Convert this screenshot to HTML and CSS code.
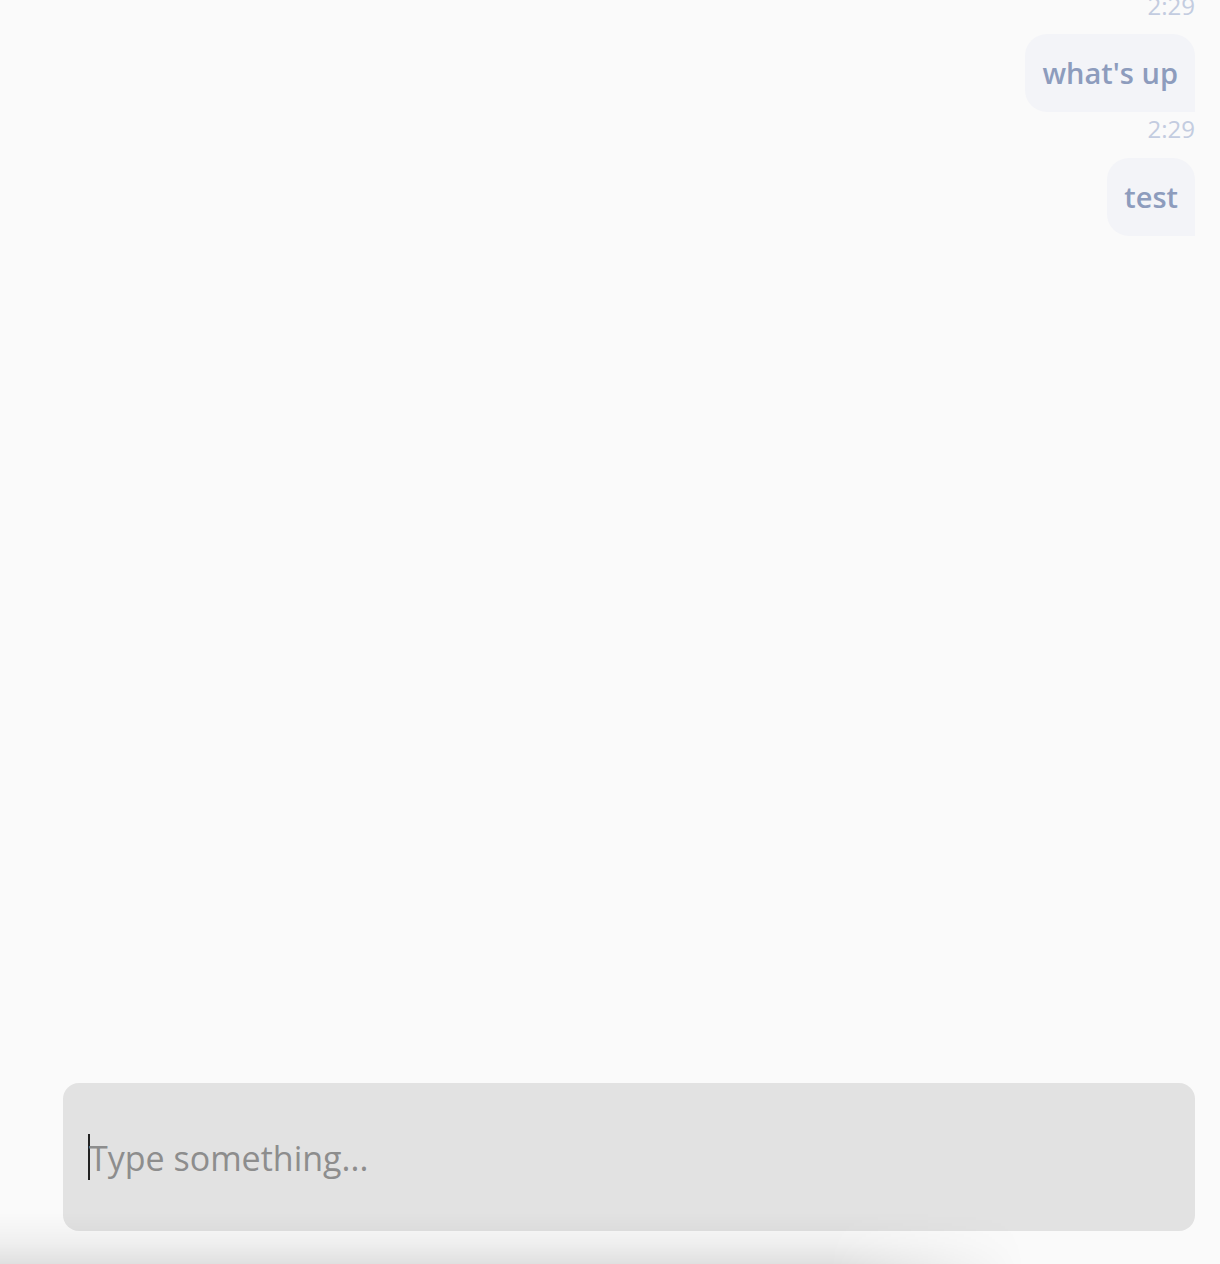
FILE: index.html
```html
<!DOCTYPE html>
<html>
<head>
<meta charset="utf-8">
<link rel="stylesheet" href="styles.css">
</head>
<body>
<div class="app">
  <div class="messages">
    <div class="time first">2:29</div>
    <div class="bubble">what's up</div>
    <div class="time">2:29</div>
    <div class="bubble">test</div>
  </div>
  <div class="composer">
    <div class="input"><span class="caret"></span><span class="placeholder">Type something...</span></div>
  </div>
  <div class="shade"></div>
</div>
</body>
</html>
```
FILE: styles.css
```css
html, body {
  margin: 0;
  padding: 0;
  background: #fafafa;
}
.app {
  position: relative;
  height: 1264px;
  overflow: hidden;
  display: flex;
  flex-direction: column;
  font-family: "Open Sans", "Noto Sans", sans-serif;
}
.messages {
  flex: 1;
  display: flex;
  flex-direction: column;
  align-items: flex-end;
  padding-right: 25px;
}
.time {
  font-size: 24px;
  line-height: 30px;
  color: #c3cce0;
  margin-top: 2px;
  margin-bottom: 14px;
}
.time.first {
  margin-top: -9px;
  margin-bottom: 13px;
}
.bubble {
  background: #f3f4f8;
  color: #8d9cbd;
  font-size: 29px;
  font-weight: 600;
  line-height: 38px;
  padding: 20px 17px;
  border-radius: 22px 22px 0 22px;
}
.composer {
  padding: 0 25px 33px 63px;
}
.input {
  height: 148px;
  background: #e2e2e2;
  border-radius: 16px;
  display: flex;
  align-items: center;
  padding-left: 25px;
}
.caret {
  width: 2px;
  height: 46px;
  background: #222;
  margin-right: -1px;
}
.placeholder {
  font-size: 34px;
  color: #8d8d8d;
  margin-top: 2px;
}
.shade {
  position: absolute;
  left: 0;
  right: 0;
  bottom: 0;
  height: 52px;
  pointer-events: none;
  background: linear-gradient(to bottom, rgba(0,0,0,0), rgba(0,0,0,0.025) 36%, rgba(0,0,0,0.045) 60%, rgba(0,0,0,0.1) 100%);
  -webkit-mask-image: linear-gradient(to right, #000 0%, #000 68%, rgba(0,0,0,0.5) 76%, transparent 84%);
  mask-image: linear-gradient(to right, #000 0%, #000 68%, rgba(0,0,0,0.5) 76%, transparent 84%);
}
```
